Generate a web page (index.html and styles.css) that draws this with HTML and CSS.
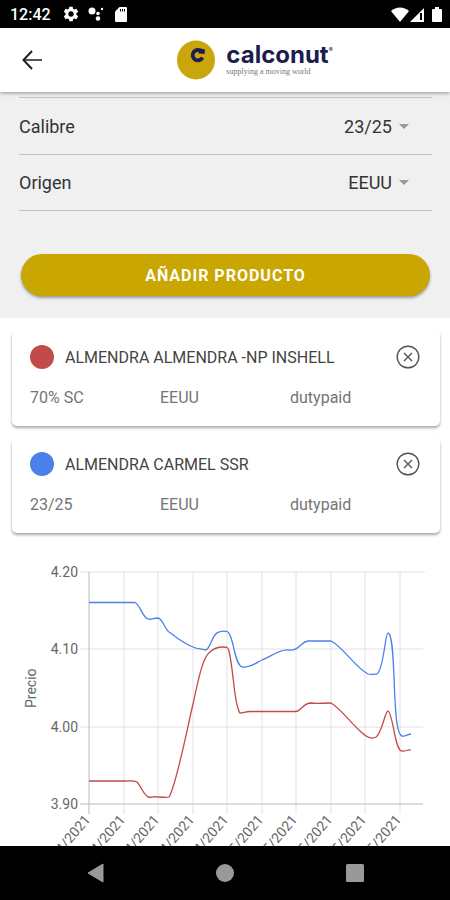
FILE: index.html
```
<!doctype html>
<html lang="es">

<head>
    <meta charset="UTF-8">
    <meta name="viewport" content="width=device-width, initial-scale=1.0">
    <title>Calconut</title>
    <link rel="stylesheet" href="styles.css">
</head>

<body>
    <div class="status-bar">
        <span class="clock">12:42</span>
        <svg width="16" height="16" viewBox="0 0 24 24" fill="#fff">
            <path fill-rule="evenodd" d="M9.5 1h5l.6 3.3 2 1.1 3.1-1.1 2.5 4.3-2.6 2.2v2.4l2.6 2.2-2.5 4.3-3.1-1.1-2 1.1-.6 3.3h-5l-.6-3.3-2-1.1-3.1 1.1-2.5-4.3 2.6-2.2v-2.4L1.300 8.600l2.500-4.300 3.100 1.100 2-1.100zM12 8a4 4 0 1 0 0 8 4 4 0 0 0 0-8z" />
        </svg>
        <svg width="16" height="16" viewBox="0 0 16 16" fill="#fff">
            <circle cx="4" cy="5" r="3.500" />
            <circle cx="10" cy="7.500" r="1.800" />
            <circle cx="10" cy="12.500" r="2.300" />
            <circle cx="14" cy="3" r="1.200" />
        </svg>
        <svg class="sd" width="12" height="15" viewBox="0 0 12 15">
            <path fill="#fff" d="M4.500 0H11a1 1 0 0 1 1 1v13a1 1 0 0 1-1 1H1a1 1 0 0 1-1-1V4.500z" />
            <path stroke="#000" d="M5.500 2v2.500M7.500 2v2.500M9.500 2v2.500" />
        </svg>
        <div class="signals">
            <svg width="18" height="15" viewBox="0 0 18 15">
                <path fill="#fff" d="M0 4C5-.8 13-.8 18 4L9 15z" />
            </svg>
            <svg width="15" height="15" viewBox="0 0 15 15">
                <path fill="#fff" d="M0 15L14 1v14z" />
                <path fill="#000" d="M10 6h2v7h-2z" />
            </svg>
            <svg class="battery" width="10" height="15" viewBox="0 0 10 15">
                <path fill="#fff" d="M3 0h4v2h2a1 1 0 0 1 1 1v11a1 1 0 0 1-1 1H1a1 1 0 0 1-1-1V3a1 1 0 0 1 1-1h2z" />
            </svg>
        </div>
    </div>

    <header class="header">
        <button type="button" class="back" aria-label="Volver">
            <svg width="20" height="20" viewBox="0 0 20 20" fill="none" stroke-width="2">
                <path stroke="#555" d="M2 10h18" />
                <path stroke="#222" d="M10 1L1.500 10l8.500 9" />
            </svg>
        </button>
        <div class="logo">
            <svg width="38" height="40" viewBox="0 0 38 40">
                <ellipse cx="19" cy="20" rx="19" ry="19.500" fill="#c9a60c" />
                <path d="M24.500 11.500A5.200 5.200 0 1 0 25.500 17.500" fill="none" stroke="#1d1c4e" stroke-width="3.800" />
                <path d="M23.500 8.500L28 9.500L27.500 14L21.500 13.500z" fill="#1d1c4e" />
            </svg>
            <div class="logo-text">
                <div class="brand">calconut<sup>®</sup></div>
                <div class="tagline">supplying a moving world</div>
            </div>
        </div>
    </header>

    <main class="content">
        <form class="filters">
            <div class="row">
                <label for="calibre">Calibre</label>
                <select id="calibre">
                    <option>23/25</option>
                </select>
                <svg width="10" height="5" viewBox="0 0 12 6"><path fill="#999" d="M0 0h12L6 6z" /></svg>
            </div>
            <div class="row">
                <label for="origen">Origen</label>
                <select id="origen">
                    <option>EEUU</option>
                </select>
                <svg width="10" height="5" viewBox="0 0 12 6"><path fill="#999" d="M0 0h12L6 6z" /></svg>
            </div>
            <button type="button" class="add-btn">AÑADIR PRODUCTO</button>
        </form>

        <section class="products">
            <article class="card">
                <div class="card-head">
                    <span class="dot red"></span>
                    <h2>ALMENDRA ALMENDRA -NP INSHELL</h2>
                    <button type="button" class="remove" aria-label="Eliminar">
                        <svg width="24" height="24" viewBox="0 0 24 24" fill="none" stroke="#555" stroke-width="1.400">
                            <circle cx="12" cy="12" r="10.800" />
                            <path d="M8 8l8 8M16 8l-8 8" />
                        </svg>
                    </button>
                </div>
                <div class="card-info">
                    <span>70% SC</span>
                    <span>EEUU</span>
                    <span>dutypaid</span>
                </div>
            </article>
            <article class="card">
                <div class="card-head">
                    <span class="dot blue"></span>
                    <h2>ALMENDRA CARMEL SSR</h2>
                    <button type="button" class="remove" aria-label="Eliminar">
                        <svg width="24" height="24" viewBox="0 0 24 24" fill="none" stroke="#555" stroke-width="1.400">
                            <circle cx="12" cy="12" r="10.800" />
                            <path d="M8 8l8 8M16 8l-8 8" />
                        </svg>
                    </button>
                </div>
                <div class="card-info">
                    <span>23/25</span>
                    <span>EEUU</span>
                    <span>dutypaid</span>
                </div>
            </article>
        </section>

        <svg class="chart" viewBox="0 0 450 340">
            <g class="grid">
                <path d="M80 22H425M80 99H423M80 177H423" />
                <path d="M124 22V264M158 22V264M193 22V264M227 22V264M262 22V264M296 22V264M331 22V264M365 22V264M400 22V264" />
            </g>
            <path class="axis" d="M89 22V264M80 254H423" />
            <g class="y-labels">
                <text x="78" y="27">4.20</text>
                <text x="78" y="104">4.10</text>
                <text x="78" y="182">4.00</text>
                <text x="78" y="259">3.90</text>
            </g>
            <text class="y-title" transform="translate(36 158) rotate(-90)">Precio</text>
            <g class="x-labels">
                <text transform="translate(91 270) rotate(-50)">01/04/2021</text>
                <text transform="translate(126 270) rotate(-50)">08/04/2021</text>
                <text transform="translate(160 270) rotate(-50)">14/04/2021</text>
                <text transform="translate(195 270) rotate(-50)">21/04/2021</text>
                <text transform="translate(229 270) rotate(-50)">28/04/2021</text>
                <text transform="translate(264 270) rotate(-50)">05/05/2021</text>
                <text transform="translate(298 270) rotate(-50)">12/05/2021</text>
                <text transform="translate(333 270) rotate(-50)">18/05/2021</text>
                <text transform="translate(367 270) rotate(-50)">24/05/2021</text>
                <text transform="translate(402 270) rotate(-50)">31/05/2021</text>
            </g>
            <path class="line red-line" d="M89 231H124C130 231 134 230 137 232C141 236 143 244 148 247C152 248 155 246 158 247C163 247 167 248 169 247C176 236 186 184 193 154C199 126 203 107 210 102C214 98 219 97 223 97C227 97 228 97 229 101C234 122 234 156 240 163C243 163 246 161.500 250 161.500H296C301 161 303 153 311 153C317 154 323 153 331 153C341 159 350 172 360 181C365 186 371 190 376 187C382 183 385 161 388 161C393 163 395 202 402 201C405 202 408 199 411 200" />
            <path class="line blue-line" d="M89 52.500H135C140 54 142 67 148 69C151 70 154 68 158 68C163 69 164 78 169 82C177 88 184 94 193 97C197 99 202 99 206 100C211 98 212 83 219 82C222 81 226 81 228 82C234 87 234 114 242 117C250 118 256 113 262 110C270 107 280 99 288 100C300 101 300 92 308 91H331C343 97 355 117 368 124C371 125 374 124 377 124C384 119 385 83 388 83C397 84 391 183 402 186C405 187 408 184 411 184" />
        </svg>
    </main>

    <nav class="nav-bar">
        <button type="button" aria-label="Atrás">
            <svg width="20" height="20" viewBox="0 0 20 20"><path fill="#999" stroke="#999" stroke-linejoin="round" d="M2 10L17 1v18z" /></svg>
        </button>
        <button type="button" aria-label="Inicio">
            <svg width="20" height="20" viewBox="0 0 20 20"><circle cx="10" cy="10" r="9" fill="#999" /></svg>
        </button>
        <button type="button" aria-label="Recientes">
            <svg width="20" height="20" viewBox="0 0 20 20"><rect x="1" y="1" width="18" height="18" rx="1.500" fill="#999" /></svg>
        </button>
    </nav>
</body>

</html>
```

FILE: styles.css
```
* {
    box-sizing: border-box;
}

body {
    margin: 0;
    height: 100vh;
    display: flex;
    flex-direction: column;
    overflow: hidden;
    background: #fff;
    font-family: Roboto, sans-serif;
    color: #333;
}

svg {
    display: block;
    flex-shrink: 0;
}

button {
    border: none;
    background: none;
    padding: 0;
    font-family: inherit;
    cursor: pointer;
}

.status-bar {
    height: 28px;
    flex-shrink: 0;
    display: flex;
    align-items: center;
    gap: 9px;
    padding: 0 8px 0 10px;
    background: #000;
    color: #fff;
}

.clock {
    font-size: 16px;
    font-weight: 500;
    margin-right: 3px;
}

.sd {
    margin-left: 2px;
}

.signals {
    display: flex;
    gap: 1px;
    margin-left: auto;
}

.battery {
    margin-left: 6px;
}

.header {
    height: 64px;
    flex-shrink: 0;
    display: grid;
    grid-template-columns: 1fr auto 1fr;
    align-items: center;
    padding: 0 22px;
    background: #fff;
    box-shadow: 0 1px 4px rgba(0, 0, 0, 0.4);
    z-index: 1;
}

.back {
    justify-self: start;
}

.logo {
    display: flex;
    align-items: center;
    gap: 11px;
    margin-left: 60px;
}

.brand {
    display: flex;
    font-family: Inter, sans-serif;
    font-size: 24px;
    line-height: 24px;
    font-weight: 700;
    color: #1d1c4e;
}

.brand sup {
    font-size: 6px;
    line-height: 14px;
}

.tagline {
    font-family: "Liberation Serif", serif;
    font-size: 8px;
    line-height: 10px;
    color: #777;
}

.content {
    flex: 1;
    min-height: 0;
    overflow: hidden;
}

.filters {
    padding: 5px 18px 22px 19px;
    background: #f0f0f0;
}

.row {
    height: 56px;
    display: flex;
    align-items: center;
    padding-right: 23px;
    border-bottom: 1px solid #c4c4c4;
    font-size: 18px;
}

.row:first-child {
    height: 58px;
    border-top: 1px solid #c4c4c4;
}

.row label {
    flex: 1;
}

.row select {
    appearance: none;
    width: 120px;
    padding: 0;
    margin-right: 7px;
    border: none;
    background: none;
    font: inherit;
    color: inherit;
    text-align-last: right;
}

.add-btn {
    display: block;
    width: calc(100% - 4px);
    height: 42px;
    margin: 43px 2px 0;
    border-radius: 21px;
    background: #c9a600;
    box-shadow: 0 2px 3px rgba(0, 0, 0, 0.35);
    color: #fff;
    font-size: 16px;
    font-weight: 700;
    letter-spacing: 1px;
}

.products {
    display: flex;
    flex-direction: column;
    gap: 12px;
    padding: 13px 10px 0 12px;
}

.card {
    padding: 13px 20px 18px 18px;
    border-radius: 5px;
    background: #fff;
    box-shadow: 0 2px 3px rgba(0, 0, 0, 0.35);
}

.card-head {
    display: flex;
    align-items: center;
    height: 26px;
}

.dot {
    width: 24px;
    height: 24px;
    margin-right: 11px;
    border-radius: 50%;
}

.dot.red {
    background: #c24a48;
}

.dot.blue {
    background: #4a80ec;
}

.card h2 {
    flex: 1;
    margin: 0;
    font-size: 16px;
    font-weight: 400;
    color: #444;
}

.card-info {
    display: grid;
    grid-template-columns: repeat(3, 1fr);
    margin-top: 18px;
    font-size: 16px;
    line-height: 20px;
    color: #757575;
}

.chart {
    width: 100%;
    margin-top: 17px;
    font-size: 14px;
}

.chart text {
    fill: #666;
}

.grid path {
    stroke: #e2e2e2;
}

.axis {
    stroke: #bbb;
}

.y-labels,
.x-labels {
    text-anchor: end;
}

.line {
    fill: none;
    stroke-width: 1.3;
}

.red-line {
    stroke: #c24a48;
}

.blue-line {
    stroke: #4a80ec;
}

.nav-bar {
    height: 54px;
    flex-shrink: 0;
    display: flex;
    align-items: center;
    justify-content: space-between;
    padding: 0 19%;
    background: #000;
}
```
